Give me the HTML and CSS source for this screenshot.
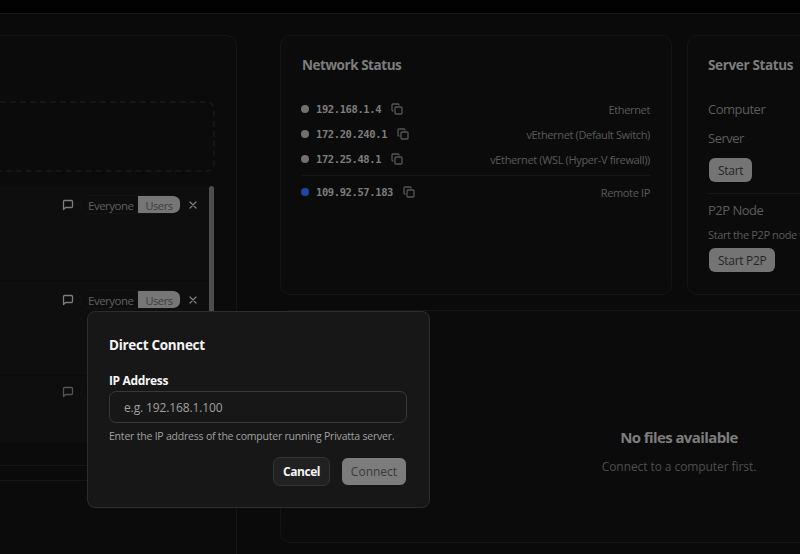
FILE: index.html
```html
<!DOCTYPE html>
<html lang="en">
<head>
  <meta charset="UTF-8">
  <meta name="viewport" content="width=device-width, initial-scale=1.0">
  <title>Privatta</title>
  <link rel="stylesheet" href="styles.css">
</head>
<body>

  <svg class="defs" width="0" height="0">
    <symbol id="copy" viewBox="0 0 24 24">
      <rect x="8" y="8" width="14" height="14" rx="2" />
      <path d="M4 16c-1.1 0-2-.9-2-2V4c0-1.1.9-2 2-2h10c1.1 0 2 .9 2 2" />
    </symbol>
    <symbol id="message" viewBox="0 0 24 24">
      <path d="M21 15a2 2 0 0 1-2 2H7l-4 4V5a2 2 0 0 1 2-2h14a2 2 0 0 1 2 2z" />
    </symbol>
    <symbol id="close" viewBox="0 0 24 24">
      <path d="M18 6 6 18M6 6l12 12" />
    </symbol>
  </svg>

  <header class="topbar"></header>

  <main class="page">
    <aside class="sidebar">
      <section class="card shares">
        <div class="dropzone"></div>
        <div class="share-list">
          <div class="rows">
            <div class="row">
              <svg class="icon message"><use href="#message" /></svg>
              <div class="toggle"><span>Everyone</span><span class="active">Users</span></div>
              <svg class="icon close"><use href="#close" /></svg>
            </div>
            <div class="row">
              <svg class="icon message"><use href="#message" /></svg>
              <div class="toggle"><span>Everyone</span><span class="active">Users</span></div>
              <svg class="icon close"><use href="#close" /></svg>
            </div>
            <div class="row last">
              <svg class="icon message"><use href="#message" /></svg>
              <div class="toggle"></div>
            </div>
          </div>
          <div class="scrollbar"></div>
        </div>
      </section>
      <section class="card extra"></section>
    </aside>

    <div class="content">
      <div class="status">
        <section class="card network">
          <h2>Network Status</h2>
          <div class="address">
            <i class="dot"></i><code>192.168.1.4</code>
            <svg class="icon copy"><use href="#copy" /></svg>
            <span class="adapter">Ethernet</span>
          </div>
          <div class="address">
            <i class="dot"></i><code>172.20.240.1</code>
            <svg class="icon copy"><use href="#copy" /></svg>
            <span class="adapter">vEthernet (Default Switch)</span>
          </div>
          <div class="address">
            <i class="dot"></i><code>172.25.48.1</code>
            <svg class="icon copy"><use href="#copy" /></svg>
            <span class="adapter">vEthernet (WSL (Hyper-V firewall))</span>
          </div>
          <div class="address remote">
            <i class="dot blue"></i><code>109.92.57.183</code>
            <svg class="icon copy"><use href="#copy" /></svg>
            <span class="adapter">Remote IP</span>
          </div>
        </section>

        <section class="card server">
          <h2>Server Status</h2>
          <p class="label">Computer</p>
          <p class="label">Server</p>
          <button class="small-btn">Start</button>
          <div class="p2p">
            <p class="label">P2P Node</p>
            <p class="hint">Start the P2P node t</p>
            <button class="small-btn">Start P2P</button>
          </div>
        </section>
      </div>

      <section class="card files">
        <h3>No files available</h3>
        <p>Connect to a computer first.</p>
      </section>
    </div>
  </main>

  <div class="dialog">
    <h2>Direct Connect</h2>
    <label for="ip">IP Address</label>
    <input id="ip" type="text" placeholder="e.g. 192.168.1.100">
    <p>Enter the IP address of the computer running Privatta server.</p>
    <div class="actions">
      <button class="cancel">Cancel</button>
      <button class="connect">Connect</button>
    </div>
  </div>

</body>
</html>
```
FILE: styles.css
```css
* {
  box-sizing: border-box;
}

body {
  font-family: "Open Sans", "Noto Sans", sans-serif;
  background-color: #0a0a0a;
  color: #7d7d7d;
  margin: 0;
  height: 554px;
  overflow: hidden;
}

h2, h3, p {
  margin: 0;
}

button, input {
  font-family: inherit;
}

.defs {
  display: none;
}

.icon {
  fill: none;
  stroke: currentColor;
  stroke-width: 2.6;
  stroke-linecap: round;
  stroke-linejoin: round;
  flex: none;
}

.topbar {
  height: 14px;
  background-color: #020202;
  border-bottom: 1px solid #161616;
}

.page {
  display: flex;
  gap: 43px;
  height: 540px;
  padding-top: 21px;
  overflow: hidden;
}

.card {
  background-color: #0b0b0b;
  border: 1px solid #151515;
  border-radius: 10px;
}

/* Left column */
.sidebar {
  flex: none;
  width: 237px;
  display: flex;
  flex-direction: column;
  gap: 14px;
}

.shares {
  flex: none;
  height: 431px;
  border-left: none;
  border-radius: 0 10px 0 0;
  padding: 65px 21px 0 0;
}

.dropzone {
  height: 71px;
  border: 2px dashed #161616;
  border-left: none;
  border-radius: 0 8px 8px 0;
}

.share-list {
  display: flex;
  margin-top: 14px;
}

.rows {
  flex: 1;
}

.row {
  display: flex;
  align-items: flex-start;
  height: 95px;
  padding: 9px 10px 0 62px;
  background-color: #0e0e0e;
  border-bottom: 1px solid #0b0b0b;
}

.row.last {
  height: 68px;
  padding-top: 6px;
}

.row.last .message {
  color: #555;
}

.message {
  width: 12px;
  height: 12px;
  margin-top: 4px;
}

.toggle {
  display: flex;
  margin-left: 7px;
  width: 99px;
  height: 19px;
  border: 1px solid #131313;
  border-right: none;
  border-radius: 7px;
  overflow: hidden;
  font-size: 11px;
  line-height: 19px;
  color: #606060;
}

.toggle span:first-child {
  width: 56px;
  padding-left: 6px;
  letter-spacing: -0.5px;
  font-size: 11.5px;
}

.toggle .active {
  flex: 1;
  margin: -1px 0;
  line-height: 21px;
  text-align: center;
  letter-spacing: -0.4px;
  background-color: #767676;
  color: #3d3d3d;
}

.close {
  width: 12px;
  height: 12px;
  margin: 4px 0 0 7px;
}

.scrollbar {
  width: 6px;
  height: 200px;
  margin-right: 1px;
  border-radius: 3px;
  background-color: #4e4e4e;
}

.extra {
  flex: none;
  height: 200px;
  border-left: none;
  border-radius: 0 10px 0 0;
}

/* Right column */
.content {
  flex: none;
  width: 720px;
  display: flex;
  flex-direction: column;
  gap: 15px;
}

.status {
  display: flex;
  gap: 15px;
  height: 260px;
}

.status h2 {
  font-size: 13.5px;
  font-weight: 700;
  line-height: 20px;
  letter-spacing: -0.45px;
}

.network {
  width: 392px;
  padding: 19px 21px;
}

.network h2 {
  margin-bottom: 21px;
}

.address {
  display: flex;
  align-items: center;
  height: 25px;
}

.dot {
  width: 8px;
  height: 8px;
  margin-right: 7px;
  margin-left: -1px;
  border-radius: 50%;
  background-color: #707070;
}

.dot.blue {
  background-color: #1c48a0;
}

.address code {
  font-family: "DejaVu Sans Mono", monospace;
  font-size: 10.5px;
  font-weight: bold;
  letter-spacing: -0.4px;
}

.copy {
  width: 12px;
  height: 12px;
  margin-left: 10px;
  color: #565656;
}

.adapter {
  margin-left: auto;
  padding-top: 1px;
  font-size: 11px;
  letter-spacing: -0.35px;
  color: #5a5a5a;
}

.remote {
  height: 33px;
  margin-top: 4px;
  border-top: 1px solid #161616;
}

.server {
  flex: 1;
  padding: 19px 20px;
}

.server h2 {
  margin-bottom: 20px;
  letter-spacing: -0.35px;
}

.label {
  font-size: 13px;
  line-height: 29px;
  letter-spacing: -0.5px;
  color: #5c5c5c;
}

.small-btn {
  display: block;
  height: 24px;
  margin: 5px 0 0 1px;
  padding: 0 9px;
  border: none;
  border-radius: 6px;
  background-color: #747474;
  color: #242424;
  font-size: 12px;
  letter-spacing: -0.3px;
}

.p2p {
  margin-top: 11px;
  padding-top: 2px;
  border-top: 1px solid #161616;
}

.p2p .small-btn {
  margin-top: 3px;
}

.hint {
  font-size: 11px;
  line-height: 20px;
  letter-spacing: -0.38px;
  color: #5a5a5a;
}

.files {
  height: 233px;
  padding: 115px 0 0 5px;
}

.files h3, .files p {
  width: 786px;
  text-align: center;
}

.files h3 {
  font-size: 15px;
  font-weight: 700;
  line-height: 22px;
  letter-spacing: -0.6px;
}

.files p {
  margin-top: 8px;
  font-size: 12px;
  line-height: 21px;
  letter-spacing: -0.08px;
  color: #4e4e4e;
}

/* Dialog */
.dialog {
  position: absolute;
  left: 87px;
  top: 311px;
  width: 343px;
  height: 197px;
  padding: 23px 22px 0 21px;
  background-color: #171717;
  border: 1px solid #2d2d2d;
  border-radius: 8px;
  color: #f5f5f5;
}

.dialog h2 {
  font-size: 13.5px;
  font-weight: 700;
  line-height: 20px;
  letter-spacing: -0.3px;
}

.dialog label {
  display: block;
  margin-top: 18px;
  font-size: 12px;
  font-weight: 700;
  line-height: 16px;
  letter-spacing: -0.35px;
}

.dialog input {
  display: block;
  width: 298px;
  height: 32px;
  margin-top: 2px;
  padding: 0 14px;
  background-color: #171717;
  border: 1px solid #383838;
  border-radius: 7px;
  color: #f5f5f5;
  font-size: 12px;
  letter-spacing: -0.12px;
}

.dialog input::placeholder {
  color: #a0a0a0;
}

.dialog p {
  margin-top: 5px;
  font-size: 10.5px;
  line-height: 16px;
  letter-spacing: -0.21px;
  color: #a0a0a0;
  white-space: nowrap;
}

.actions {
  display: flex;
  justify-content: flex-end;
  gap: 11px;
  margin-top: 13px;
}

.actions button {
  height: 29px;
  padding: 0;
  border-radius: 7px;
  font-size: 12px;
}

.actions .cancel {
  width: 57px;
  background-color: #212121;
  border: 1px solid #343434;
  color: #f5f5f5;
  font-weight: 700;
  letter-spacing: -0.45px;
}

.actions .connect {
  width: 66px;
  background-color: #7c7c7c;
  border: 1px solid #171717;
  color: #3a3a3a;
}
```
